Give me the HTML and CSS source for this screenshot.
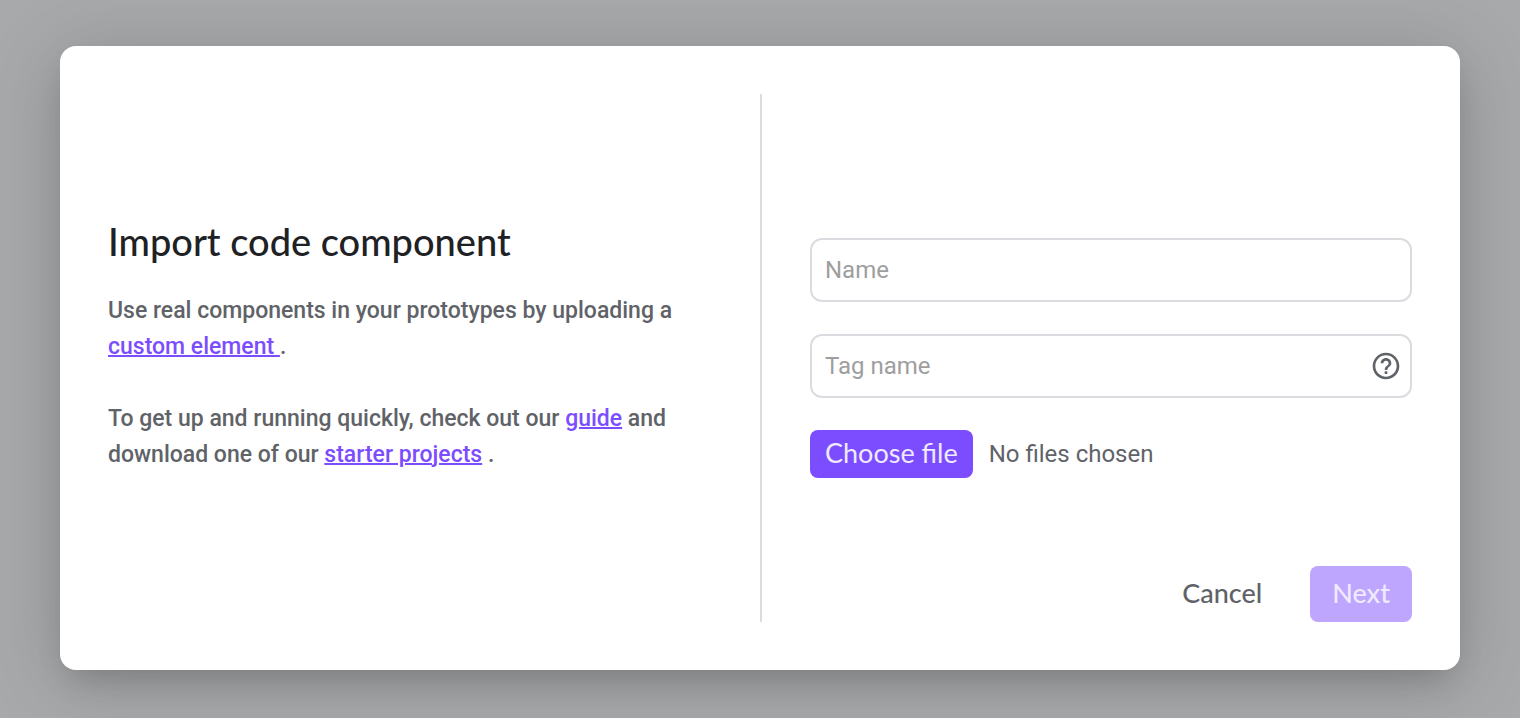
FILE: index.html
```html
<!DOCTYPE html>
<html lang="en">
<head>
<meta charset="utf-8">
<meta name="viewport" content="width=device-width, initial-scale=1">
<title>Import code component</title>
<link rel="stylesheet" href="styles.css">
</head>
<body>
<main class="dialog" role="dialog" aria-labelledby="dialog-title">
  <section class="intro">
    <h1 class="title" id="dialog-title">Import code component</h1>
    <p class="copy">Use real components in your prototypes by uploading a <a class="link" href="#custom-element">custom element&nbsp;</a>.</p>
    <p class="copy">To get up and running quickly, check out our <a class="link" href="#guide">guide</a> and download one of our <a class="link" href="#starter-projects">starter projects</a> .</p>
  </section>
  <form class="form">
    <div class="fields">
      <div class="field">
        <input class="input" type="text" aria-label="Name" placeholder="Name">
      </div>
      <div class="field">
        <input class="input" type="text" aria-label="Tag name" placeholder="Tag name">
        <button class="help" type="button" aria-label="Help">
          <svg class="help-icon" viewBox="0 0 24 24" aria-hidden="true"><path d="M11 18h2v-2h-2v2zm1-16C6.480 2 2 6.480 2 12s4.480 10 10 10 10-4.480 10-10S17.520 2 12 2zm0 18c-4.410 0-8-3.590-8-8s3.590-8 8-8 8 3.590 8 8-3.590 8-8 8zm0-14c-2.210 0-4 1.790-4 4h2c0-1.100.9-2 2-2s2 .9 2 2c0 2-3 1.750-3 5h2c0-2.250 3-2.500 3-5 0-2.210-1.790-4-4-4z"/></svg>
        </button>
      </div>
      <div class="file">
        <button class="choose" type="button">Choose file</button>
        <span class="file-status">No files chosen</span>
      </div>
    </div>
    <div class="actions">
      <button class="action cancel" type="button">Cancel</button>
      <button class="action next" type="submit" disabled>Next</button>
    </div>
  </form>
</main>
</body>
</html>
```

FILE: styles.css
```css
* {
  box-sizing: border-box;
}

body {
  margin: 0;
  min-height: 100vh;
  padding: 46px 60px 48px;
  display: grid;
  background: #a8a9ab;
  color: #5f6368;
  font: 500 24px/36px Roboto, sans-serif;
}

.dialog {
  display: grid;
  grid-template-columns: 1fr 1fr;
  padding: 48px;
  border-radius: 16px;
  background: #fff;
  box-shadow:
    0 16px 32px -10px rgba(0, 0, 0, 0.18),
    0 10px 76px 4px rgba(0, 0, 0, 0.16);
}

.intro {
  display: flex;
  flex-direction: column;
  justify-content: center;
  padding: 0 48px 24px 0;
}

.title {
  margin: 0 0 30px;
  color: #202124;
  font: 500 38px/44px Lato, sans-serif;
}

.copy {
  margin: 0 0 36px;
  font-size: 23px;
}

.copy:last-child {
  margin-bottom: 0;
}

.link {
  color: #7c4dff;
  text-decoration-thickness: 2px;
}

.form {
  display: flex;
  flex-direction: column;
  padding-left: 48px;
  border-left: 2px solid #dadce0;
}

.fields {
  flex: 1;
  display: flex;
  flex-direction: column;
  justify-content: flex-end;
  gap: 32px;
}

.field {
  position: relative;
}

.input {
  display: block;
  width: 100%;
  height: 64px;
  padding: 0 13px;
  border: 2px solid #dadce0;
  border-radius: 12px;
  background: #fff;
  color: #202124;
  font: 400 24px/36px Roboto, sans-serif;
}

.input::placeholder {
  color: #9e9e9e;
}

.help {
  position: absolute;
  top: 16px;
  right: 10px;
  width: 32px;
  height: 32px;
  padding: 0;
  border: 0;
  background: none;
}

.help-icon {
  display: block;
  fill: #5f6368;
}

.file {
  display: flex;
  align-items: center;
  gap: 16px;
  font-weight: 400;
}

.choose {
  height: 48px;
  padding: 0 15px 2px;
  border: 0;
  border-radius: 8px;
  background: #7c4dff;
  color: #f0eaff;
  font: 400 27px/36px Lato, sans-serif;
}

.actions {
  display: flex;
  justify-content: flex-end;
  gap: 26px;
  margin-top: 88px;
}

.action {
  height: 56px;
  padding: 0 22px 2px;
  border: 0;
  border-radius: 8px;
  font: 500 27px/36px Lato, sans-serif;
}

.cancel {
  background: none;
  color: #5f6368;
}

.next {
  background: #bea6ff;
  color: #f0eaff;
}
```
